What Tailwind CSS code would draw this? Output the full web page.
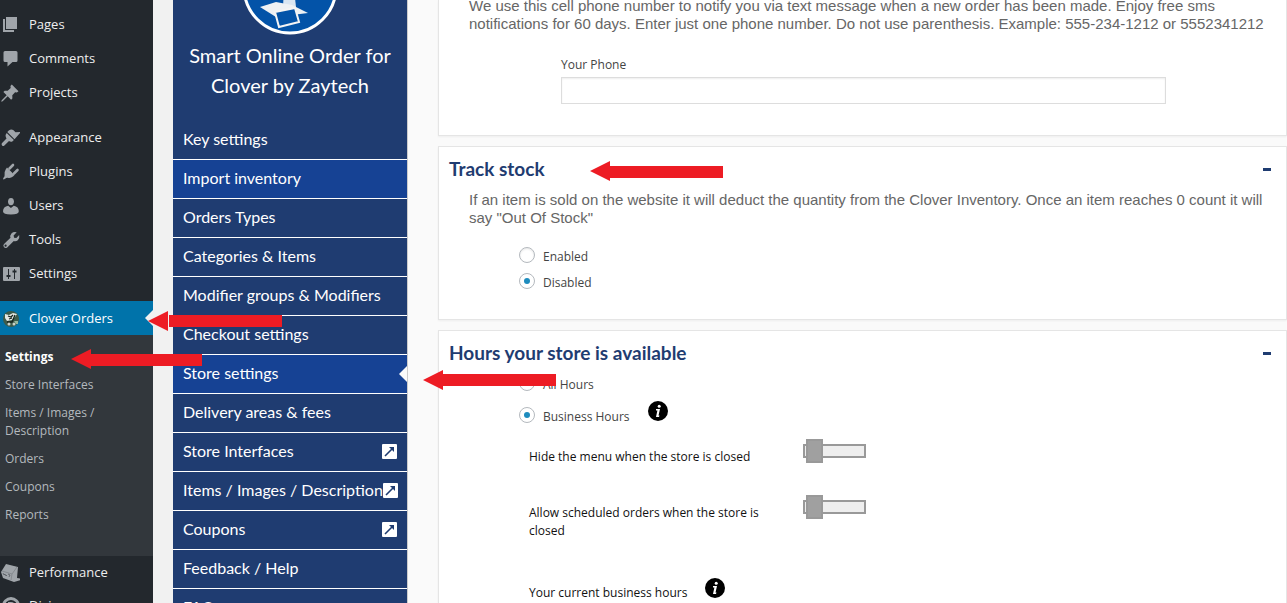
<!DOCTYPE html>
<html lang="en">
<head>
    <meta charset="UTF-8" />
    <title>Smart Online Order - Store settings</title>
    <script src="https://cdn.jsdelivr.net/npm/@tailwindcss/browser@4"></script>
</head>
<body class="relative flex h-screen overflow-hidden bg-[#f1f1f1] font-['Open_Sans',sans-serif] text-[13px] text-[#444]">

    <!-- WordPress admin menu -->
    <nav class="w-[153px] shrink-0 bg-[#23282d] pt-2 text-[13px] text-[#eee]">
        <ul class="mb-[11px]">
            <li><a href="#" class="flex h-[34px] items-center gap-[9px]">
                <svg class="size-5 text-[#a0a5aa]" viewBox="1 0 20 20" fill="currentColor"><path d="M7 14V2h11v12H7zm-1 1h9v2H4V4h2v11z"/></svg>Pages</a></li>
            <li><a href="#" class="flex h-[34px] items-center gap-[9px]">
                <svg class="size-5 text-[#a0a5aa]" viewBox="1 0 20 20" fill="currentColor"><path d="M6 2h11q1.500 0 1.500 1.500v8q0 1.500-1.500 1.500h-3.500l-5 4.500V13H6q-1.500 0-1.500-1.500v-8Q4.500 2 6 2z"/></svg>Comments</a></li>
            <li><a href="#" class="flex h-[34px] items-center gap-[9px]">
                <svg class="size-5 text-[#a0a5aa]" viewBox="0 0 20 20" fill="currentColor"><path d="M10.4 3.0l1.4-1.5 6.700 6.700-1.600 1.300-1.800-.2-2.800 3 .1 3.100-1.300 1.300-3.400-3.400L2.700 18.300l-1.500.5.5-1.500 5-5-3.300-3.300 1.300-1.300 3 .1 3-2.900z"/></svg>Projects</a></li>
        </ul>
        <ul class="mb-[10px]">
            <li><a href="#" class="flex h-[34px] items-center gap-[9px]">
                <svg class="size-5 text-[#a0a5aa]" viewBox="0 0 20 20" fill="currentColor"><path d="M14.5 11.3L7.3 4.1l1.500-1.700q2.200-1.500 4.400-.5l2.300 2.300 4.900-.2q.3.400-.3.900zM6.700 4.900l7.200 7.200-1.600 1.300q-1.700.8-3.300-.5l-4.600 4.500q-1.200 1-2.300 0-1-1.200 0-2.300l4.400-4.500q-1.400-2.500-.7-4.200z"/></svg>Appearance</a></li>
            <li><a href="#" class="flex h-[34px] items-center gap-[9px]">
                <svg class="size-5 text-[#a0a5aa]" viewBox="0 0 20 20" fill="currentColor"><path d="M7 5.500l7.500 7.500-1.500 1.500q-2.500 2-5.200 1.200-1.300-.2-3 1.300l-1.300.5-.5-.5.500-1.300q1.500-1.700 1.100-3-.5-2.800 1.200-5.500z"/><path d="M9.500 6.500l3.500-3.500M14 11.500l3.500-3.500" stroke="currentColor" stroke-width="2.600" stroke-linecap="round"/></svg>Plugins</a></li>
            <li><a href="#" class="flex h-[34px] items-center gap-[9px]">
                <svg class="size-5 text-[#a0a5aa]" viewBox="0 0 20 20" fill="currentColor"><path d="M11 9.300q-3-.3-3-3.900Q8.300 2 11 2t3 3.400q-.2 3.600-3 3.900zM13.800 9.800q4.900 1 5 5.400 0 3.200-7.900 3.300-7.800-.1-7.900-3.300.1-4.400 5.200-5.400l2.700 2.100z"/></svg>Users</a></li>
            <li><a href="#" class="flex h-[34px] items-center gap-[9px]">
                <svg class="size-5 text-[#a0a5aa]" viewBox="0 0 20 20" fill="currentColor"><path fill-rule="evenodd" d="M16.700 2.300l-3.100 3.200.5 2.300 2.200.3 2.900-3q.7 3.500-1.400 5.100-1.800 1.500-4 .8l-6.600 6.400q-1.700 1.200-3.200-.1-1.400-1.700 0-3.200l6.500-6.400q-.8-2.300.9-4.300 2.200-2 5.300-1.100zM5.600 14.600a1.100 1.100 0 1 0 0 2.200 1.100 1.100 0 0 0 0-2.200z"/></svg>Tools</a></li>
            <li><a href="#" class="flex h-[34px] items-center gap-[9px]">
                <svg class="size-5 text-[#a0a5aa]" viewBox="0 0 20 20" fill="currentColor"><path fill-rule="evenodd" d="M4 3h15q1 0 1 1v12q0 1-1 1H4q-1 0-1-1V4q0-1 1-1zM8 5v6H6.500v2H8v2h1v-2h1.500v-2H9V5zM14 5v1.500h-1.500v2H14V15h1V8.500h1.500v-2H15V5z"/></svg>Settings</a></li>
        </ul>
        <a href="#" class="relative flex h-[34px] items-center gap-[9px] bg-[#0073aa] pt-[2px] text-white">
            <svg class="size-5" viewBox="0 0 20 20"><circle cx="11" cy="10" r="8" fill="#3d5b4a"/><path d="M5 5l4 1 4-2 4 1-2 3-3 3-5 1-2-3z" fill="#e4e8e4"/><path d="M8 7l3 1 2-2M9 10l3-1M15 6l-3 7H7" stroke="#17241d" fill="none" stroke-width="1.300"/><circle cx="9" cy="15" r="1.500" fill="#c9d2cb"/><circle cx="14" cy="15" r="1.500" fill="#c9d2cb"/><path d="M14 12h4v3h-2z" fill="#93b89e"/></svg>
            Clover Orders
            <span class="absolute top-[9px] right-0 border-y-8 border-r-8 border-y-transparent border-r-[#f1f1f1]"></span>
        </a>
        <ul class="bg-[#32373c] pt-2 pb-[27px] text-[12px] leading-[18px] text-[#b4b9be]">
            <li><a href="#" class="block px-[5px] py-[5px] font-bold text-white">Settings</a></li>
            <li><a href="#" class="block px-[5px] py-[5px]">Store Interfaces</a></li>
            <li><a href="#" class="block px-[5px] py-[5px]">Items / Images /<br>Description</a></li>
            <li><a href="#" class="block px-[5px] py-[5px]">Orders</a></li>
            <li><a href="#" class="block px-[5px] py-[5px]">Coupons</a></li>
            <li><a href="#" class="block px-[5px] py-[5px]">Reports</a></li>
        </ul>
        <ul>
            <li><a href="#" class="flex h-[34px] items-center gap-[9px]">
                <svg class="size-5 shrink-0" viewBox="0 0 20 20"><path d="M6 1l12 3-1 11q4 0 4 2l-7 2-11-4-2-6z" fill="#a0a5aa"/><path d="M2 8l10 3 5-7M12 11l-1 6" stroke="#7f8489" fill="none" stroke-width=".8"/><path d="M3 10l1 2 1-1 1 2 1-1M8 11l2 1-1 2" stroke="#4a4f54" fill="none" stroke-width=".7"/></svg>Performance</a></li>
            <li><a href="#" class="flex h-8 items-center gap-[9px]">
                <svg class="size-5" viewBox="0 0 20 20"><circle cx="11" cy="10" r="7.500" fill="none" stroke="#a0a5aa" stroke-width="3"/><path d="M8 6h3a4 4 0 0 1 0 8H8z" fill="#a0a5aa"/></svg>Divi</a></li>
        </ul>
    </nav>

    <div class="ml-5 flex min-w-0 flex-1 bg-[#fafafa]">
        <!-- Plugin menu -->
        <aside class="w-[235px] shrink-0 border-r border-[#ccc] bg-[#1f3c71] font-[Lato,sans-serif] text-[16px] text-white">
            <svg class="mx-auto h-[35px] w-24" viewBox="0 61 96 35">
                <circle cx="48" cy="48" r="46" fill="#0353a8" stroke="#fff" stroke-width="3"/>
                <path d="M42 50h10l2 18h-13z" fill="#d8e5f2"/>
                <path d="M18 68l16-5 16 3 16 8-32 4z" fill="#eef1f4"/>
                <path d="M33 73l20-4 4 14-20 5z" fill="#0353a8" stroke="#f4f4f4" stroke-width="2"/>
            </svg>
            <h2 class="mt-[5px] mb-[21px] px-2 text-center text-[20px] leading-[30px]">Smart Online Order for Clover by Zaytech</h2>
            <ul class="leading-9 [&>li]:border-b [&>li]:border-white [&_a]:px-[10px] [&_a]:pb-[2px]">
                <li><a href="#" class="block">Key settings</a></li>
                <li><a href="#" class="block bg-[#164294]">Import inventory</a></li>
                <li><a href="#" class="block">Orders Types</a></li>
                <li><a href="#" class="block">Categories &amp; Items</a></li>
                <li><a href="#" class="block">Modifier groups &amp; Modifiers</a></li>
                <li><a href="#" class="block">Checkout settings</a></li>
                <li><a href="#" class="relative block bg-[#164294]">Store settings<span class="absolute top-[11px] right-0 border-y-8 border-r-8 border-y-transparent border-r-[#fafafa]"></span></a></li>
                <li><a href="#" class="block">Delivery areas &amp; fees</a></li>
                <li><a href="#" class="flex items-center justify-between whitespace-nowrap">Store Interfaces
                    <svg class="size-[15px] shrink-0" viewBox="0 0 15 15"><rect width="15" height="15" rx="1" fill="#fff"/><path d="M3 12l7-7" stroke="#1f3c71" stroke-width="1.600"/><path d="M7 3h5v5z" fill="#1f3c71"/></svg></a></li>
                <li><a href="#" class="flex items-center justify-between whitespace-nowrap">Items / Images / Description
                    <svg class="size-[15px] shrink-0" viewBox="0 0 15 15"><rect width="15" height="15" rx="1" fill="#fff"/><path d="M3 12l7-7" stroke="#1f3c71" stroke-width="1.600"/><path d="M7 3h5v5z" fill="#1f3c71"/></svg></a></li>
                <li><a href="#" class="flex items-center justify-between whitespace-nowrap">Coupons
                    <svg class="size-[15px] shrink-0" viewBox="0 0 15 15"><rect width="15" height="15" rx="1" fill="#fff"/><path d="M3 12l7-7" stroke="#1f3c71" stroke-width="1.600"/><path d="M7 3h5v5z" fill="#1f3c71"/></svg></a></li>
                <li><a href="#" class="block">Feedback / Help</a></li>
                <li><a href="#" class="block">FAQ</a></li>
            </ul>
        </aside>

        <!-- Store settings -->
        <main class="ml-[30px] flex min-w-0 flex-1 flex-col gap-[10px] text-[12px]">
            <section class="border border-t-0 border-[#e5e5e5] bg-white pb-[31px] shadow-xs">
                <p class="-mt-[3px] pr-5 pl-[30px] font-['Liberation_Sans',sans-serif] text-[15px] leading-[18px] text-[#666]">We use this cell phone number to notify you via text message when a new order has been made. Enjoy free sms notifications for 60 days. Enter just one phone number. Do not use parenthesis. Example: 555-234-1212 or 5552341212</p>
                <div class="mt-[23px] mr-[120px] ml-[122px]">
                    <label for="phone" class="block leading-[18px]">Your Phone</label>
                    <input id="phone" type="text" class="mt-[3px] block h-[27px] w-full border border-[#ddd] bg-white px-2 shadow-[inset_0_1px_2px_rgba(0,0,0,0.07)]" />
                </div>
            </section>

            <section class="border border-[#e5e5e5] bg-white pb-[25px] shadow-xs">
                <div class="flex h-11 items-center justify-between pr-[14px] pl-[10px] font-[Lato,sans-serif] text-[19px] font-bold text-[#1f3c71]">
                    <h3>Track stock</h3>
                    <button type="button" aria-label="Collapse" class="flex h-5 w-[10px] items-center justify-center"><span class="h-[3px] w-2 bg-[#1f3c71]"></span></button>
                </div>
                <p class="pr-5 pl-[30px] font-['Liberation_Sans',sans-serif] text-[15px] leading-[18px] text-[#666]">If an item is sold on the website it will deduct the quantity from the Clover Inventory. Once an item reaches 0 count it will say "Out Of Stock"</p>
                <div class="mt-[15px] ml-20">
                    <label class="flex h-[26px] items-center gap-2"><input type="radio" name="stock" class="size-4 appearance-none rounded-full border border-[#b4b9be] bg-white shadow-[inset_0_1px_2px_rgba(0,0,0,0.1)]" /><span class="pt-1">Enabled</span></label>
                    <label class="flex h-[26px] items-center gap-2"><input type="radio" name="stock" checked class="grid size-4 appearance-none place-items-center rounded-full border border-[#b4b9be] bg-white before:size-[6px] before:rounded-full before:bg-[#1e8cbe]" /><span class="pt-1">Disabled</span></label>
                </div>
            </section>

            <section class="flex-1 border border-b-0 border-[#e5e5e5] bg-white shadow-xs">
                <div class="flex h-11 items-center justify-between pr-[14px] pl-[10px] font-[Lato,sans-serif] text-[19px] font-bold text-[#1f3c71]">
                    <h3>Hours your store is available</h3>
                    <button type="button" aria-label="Collapse" class="flex h-5 w-[10px] items-center justify-center"><span class="h-[3px] w-2 bg-[#1f3c71]"></span></button>
                </div>
                <div class="-mt-2 ml-20">
                    <label class="flex h-8 items-center gap-2"><input type="radio" name="hours" class="size-4 appearance-none rounded-full border border-[#b4b9be] bg-white shadow-[inset_0_1px_2px_rgba(0,0,0,0.1)]" /><span class="pt-1">All Hours</span></label>
                    <div class="flex h-8 items-center gap-[18px]">
                        <label class="flex items-center gap-2"><input type="radio" name="hours" checked class="grid size-4 appearance-none place-items-center rounded-full border border-[#b4b9be] bg-white before:size-[6px] before:rounded-full before:bg-[#1e8cbe]" /><span class="pt-1">Business Hours</span></label>
                        <svg class="mb-2 size-5" viewBox="0 0 20 20"><circle cx="10" cy="10" r="10"/><circle cx="11.200" cy="5.200" r="1.500" fill="#fff"/><path d="M8 8h4l-1.500 6.500h1L11 16H8l1.400-6.600H8z" fill="#fff"/></svg>
                    </div>
                </div>
                <div class="ml-[90px] leading-[18px] text-[#111]">
                    <div class="mt-[17px] flex min-h-[18px] items-start">
                        <label for="hide-menu" class="w-[254px] pr-2">Hide the menu when the store is closed</label>
                        <input id="hide-menu" type="checkbox" class="relative ml-5 h-[14px] w-[63px] -translate-y-1 appearance-none border-2 border-[#999] bg-[#eee] before:absolute before:-top-[7px] before:left-px before:h-6 before:w-[17px] before:border-2 before:border-[#999] before:bg-[#a0a0a0]" />
                    </div>
                    <div class="mt-[38px] flex items-start">
                        <label for="scheduled" class="w-[254px] pr-4">Allow scheduled orders when the store is closed</label>
                        <input id="scheduled" type="checkbox" class="relative ml-5 h-[14px] w-[63px] -translate-y-1 appearance-none border-2 border-[#999] bg-[#eee] before:absolute before:-top-[7px] before:left-px before:h-6 before:w-[17px] before:border-2 before:border-[#999] before:bg-[#a0a0a0]" />
                    </div>
                    <div class="mt-[34px] flex items-center gap-[18px]">
                        <span class="pt-[10px]">Your current business hours</span>
                        <svg class="size-5" viewBox="0 0 20 20"><circle cx="10" cy="10" r="10"/><circle cx="11.200" cy="5.200" r="1.500" fill="#fff"/><path d="M8 8h4l-1.500 6.500h1L11 16H8l1.400-6.600H8z" fill="#fff"/></svg>
                    </div>
                </div>
            </section>
        </main>
    </div>

    <!-- Pointer arrows -->
    <svg class="absolute top-[311px] left-[148px] h-5 w-[134px]" viewBox="0 0 134 20" fill="#ed1c24"><path d="M0 10L20 0v20zM21 4h113v12H21z"/></svg>
    <svg class="absolute top-[349px] left-[71px] h-5 w-[131px]" viewBox="0 0 131 20" fill="#ed1c24"><path d="M0 10L20 0v5h111v12H20v3z"/></svg>
    <svg class="absolute top-[370px] left-[423px] h-5 w-[133px]" viewBox="0 0 133 20" fill="#ed1c24"><path d="M0 10L20 0v20zM20 4h113v12H20z"/></svg>
    <svg class="absolute top-[161px] left-[590px] h-5 w-[133px]" viewBox="0 0 133 20" fill="#ed1c24"><path d="M0 10L20 0v20zM20 5h113v12H20z"/></svg>
</body>
</html>
